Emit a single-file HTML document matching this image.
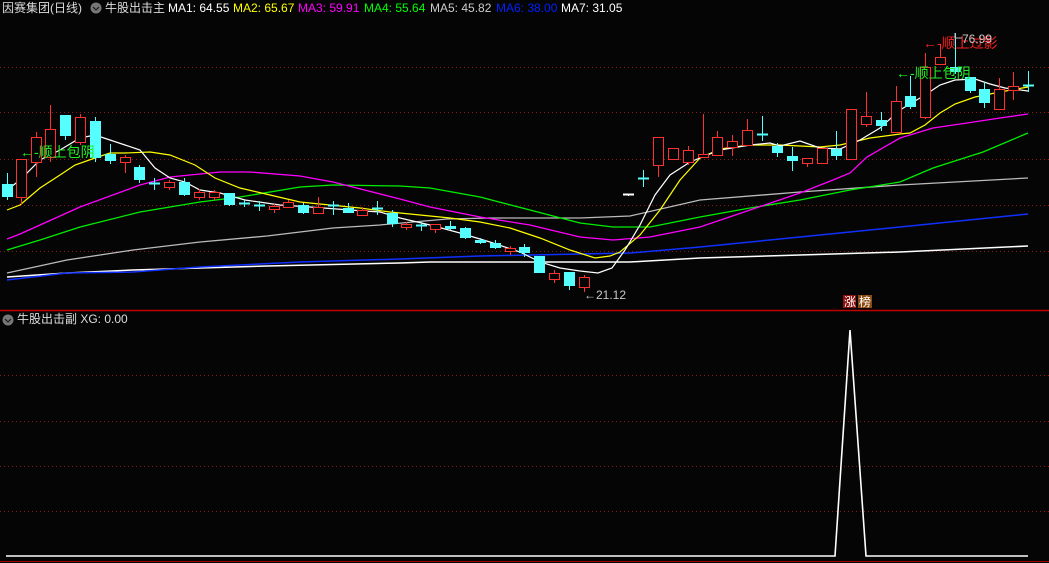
<!DOCTYPE html>
<html><head><meta charset="utf-8"><style>
html,body{margin:0;padding:0;background:#000;}
body{width:1049px;height:563px;overflow:hidden;position:relative;font-family:"Liberation Sans","Noto Sans CJK SC",sans-serif;}
svg{position:absolute;left:0;top:0;}
.t{position:absolute;top:1px;font-size:12px;line-height:14px;white-space:nowrap;}
</style></head><body>
<svg id="s" width="1049" height="563" viewBox="0 0 1049 563" xmlns="http://www.w3.org/2000/svg">
<rect width="1049" height="563" fill="#050505"/>
<g stroke="#8a1a1a" stroke-dasharray="1,3" stroke-width="1">
<line x1="0" y1="67.5" x2="1049" y2="67.5"/><line x1="0" y1="112.5" x2="1049" y2="112.5"/><line x1="0" y1="159.5" x2="1049" y2="159.5"/><line x1="0" y1="205.5" x2="1049" y2="205.5"/><line x1="0" y1="251.5" x2="1049" y2="251.5"/>
<line x1="0" y1="375.5" x2="1049" y2="375.5"/><line x1="0" y1="421.5" x2="1049" y2="421.5"/><line x1="0" y1="466.5" x2="1049" y2="466.5"/><line x1="0" y1="511.5" x2="1049" y2="511.5"/>
</g>
<line x1="0" y1="310.5" x2="1049" y2="310.5" stroke="#c00000" stroke-width="1.5"/>
<line x1="0" y1="561.5" x2="1049" y2="561.5" stroke="#a00000" stroke-width="1"/>
<g id="ma" fill="none" stroke-width="1.3"></g>
<g id="cd"></g>
<polyline points="6,556 835,556 850,330 866,556 1028,556" fill="none" stroke="#fff" stroke-width="1.6"/>
<text x="20" y="157" font-size="14" fill="#22ee22" font-family="Liberation Sans,Noto Sans CJK SC,sans-serif">←-顺上包阴</text>
<text x="896" y="78" font-size="14" fill="#22ee22" font-family="Liberation Sans,Noto Sans CJK SC,sans-serif">←-顺上包阴</text>
<text x="923" y="48" font-size="14" fill="#ff2020" font-family="Liberation Sans,Noto Sans CJK SC,sans-serif">←-顺上过影</text>
<polyline points="955,33 955,38 962,38" fill="none" stroke="#bbb" stroke-width="1"/>
<text x="962" y="43" font-size="12" fill="#c8c8c8" font-family="Liberation Sans,sans-serif">76.99</text>
<text x="584" y="299" font-size="12" fill="#c8c8c8" font-family="Liberation Sans,sans-serif">←21.12</text>
<rect x="843" y="295" width="13" height="13" fill="#8a1010"/>
<rect x="858" y="295" width="14" height="13" fill="#8a4a10"/>
<text x="844" y="306" font-size="12" fill="#fff" font-family="Noto Sans CJK SC,sans-serif">涨</text>
<text x="859" y="306" font-size="12" fill="#fff" font-family="Noto Sans CJK SC,sans-serif">榜</text>
<circle cx="96" cy="8" r="5.5" fill="#777"/><polyline points="93,7 96,10 99,7" fill="none" stroke="#222" stroke-width="1.3"/>
<circle cx="8" cy="320" r="5.5" fill="#777"/><polyline points="5,319 8,322 11,319" fill="none" stroke="#222" stroke-width="1.3"/>
</svg>
<div class="t" style="left:2px;color:#ddd">因赛集团(日线)</div>
<div class="t" style="left:105px;color:#ddd">牛股出击主</div>
<div class="t" style="left:168px;color:#fff">MA1: 64.55</div>
<div class="t" style="left:233px;color:#ffff00">MA2: 65.67</div>
<div class="t" style="left:298px;color:#ff00ff">MA3: 59.91</div>
<div class="t" style="left:364px;color:#00ff00">MA4: 55.64</div>
<div class="t" style="left:430px;color:#ccc">MA5: 45.82</div>
<div class="t" style="left:496px;color:#0020ff">MA6: 38.00</div>
<div class="t" style="left:561px;color:#fff">MA7: 31.05</div>
<div class="t" style="left:17px;top:312px;color:#ddd">牛股出击副 XG: 0.00</div>
<script>
var NS="http://www.w3.org/2000/svg";
function pl(g,pts,c,w){var p=document.createElementNS(NS,"polyline");p.setAttribute("points",pts.map(function(a){return a.join(",")}).join(" "));p.setAttribute("stroke",c);p.setAttribute("fill","none");p.setAttribute("stroke-width",w||1.3);g.appendChild(p);}
var ma=document.getElementById("ma");
pl(ma,[[7,277],[67,273],[133,270],[267,266],[400,263],[430,262],[630,262],[700,258],[800,255],[900,252],[1028,246]],"#fff",1.5);
pl(ma,[[7,280],[67,273],[133,272],[200,267],[300,262],[400,259],[480,256],[580,254],[630,253],[700,247],[800,237],[900,227],[1028,214]],"#1030ff",1.5);
pl(ma,[[7,273],[67,260],[133,250],[200,242],[267,236],[333,228],[380,225],[413,222],[447,219],[490,218],[580,218],[630,216],[700,200],[800,192],[900,185],[1028,178]],"#bbb",1.3);
pl(ma,[[7,250],[40,240],[80,227],[140,212],[200,202],[240,197],[300,187],[333,185],[400,186],[430,188],[480,197],[530,210],[580,223],[613,227],[650,227],[700,217],[750,208],[800,200],[850,190],[900,182],[933,168],[983,152],[1028,133]],"#00ee00",1.3);
pl(ma,[[7,239],[20,234],[80,207],[140,185],[170,177],[220,172],[250,172],[300,176],[333,182],[400,199],[430,207],[480,217],[530,225],[580,237],[613,240],[650,237],[700,227],[750,210],[800,193],[833,180],[850,173],[867,157],[900,138],[933,128],[967,123],[1000,118],[1028,114]],"#ff00ff",1.3);
pl(ma,[[7,210],[20,205],[40,188],[60,175],[75,165],[95,158],[110,153],[125,153],[150,152],[170,155],[195,165],[215,178],[240,188],[270,195],[300,202],[330,205],[360,208],[390,212],[420,215],[450,218],[480,222],[510,228],[540,238],[570,250],[595,258],[610,256],[620,252],[640,235],[660,210],[680,180],[700,158],[720,149],[750,145],[780,145],[820,147],[840,145],[870,138],[900,134],[910,133],[925,125],[940,113],[955,104],[975,97],[1000,92],[1028,87]],"#ffff00",1.2);
pl(ma,[[7,190],[20,180],[40,160],[60,150],[80,138],[95,135],[110,140],[125,145],[140,150],[155,168],[170,178],[185,182],[200,190],[220,193],[245,200],[280,205],[310,207],[350,210],[380,212],[400,218],[430,225],[460,233],[490,242],[520,252],[540,262],[560,268],[580,271],[598,273],[612,268],[625,250],[640,225],[655,195],[670,175],[690,162],[720,150],[750,145],[770,143],[780,146],[800,141],[820,148],[840,149],[860,140],[880,128],[900,110],[925,95],[940,85],[955,80],[975,79],[990,84],[1005,88],[1028,91]],"#fff",1.2);
var C=[[7,184,197,173,200,"c"],[21,159,197,159,205,"r"],[36,137,162,132,177,"r"],[50,129,157,105,162,"r"],[65,115,136,115,140,"c"],[80,117,142,114,145,"r"],[95,121,158,117,162,"c"],[110,154,161,144,164,"c"],[125,157,162,155,173,"r"],[139,167,180,165,183,"c"],[154,183,185,178,190,"c"],[169,182,187,180,190,"r"],[184,182,195,178,196,"c"],[199,192,197,189,200,"r"],[214,192,197,190,200,"r"],[229,193,205,193,206,"c"],[244,203,205,200,207,"c"],[259,205,207,201,211,"c"],[274,206,209,204,213,"r"],[288,202,207,200,208,"r"],[303,205,213,203,214,"c"],[318,207,213,197,214,"r"],[333,205,207,201,215,"c"],[348,208,213,203,213,"c"],[362,210,215,207,216,"r"],[377,208,210,201,215,"c"],[392,213,224,210,227,"c"],[406,224,227,222,230,"r"],[421,225,227,222,231,"c"],[435,224,229,224,233,"r"],[450,226,229,221,230,"c"],[465,228,238,227,239,"c"],[480,240,243,238,244,"c"],[495,243,248,240,249,"c"],[510,248,251,246,255,"r"],[524,247,253,244,257,"c"],[539,256,273,256,273,"c"],[554,273,279,270,283,"r"],[569,272,286,272,290,"c"],[584,277,287,275,292,"r"],
[628,194,195,194,196,"w"],[643,178,180,170,187,"c"],[658,137,165,137,177,"r"],[673,148,159,148,160,"r"],[688,150,162,146,165,"r"],[703,154,157,114,157,"r"],[717,137,155,131,155,"r"],[732,141,147,135,156,"r"],[747,130,145,119,146,"r"],[762,134,136,116,141,"c"],[777,146,153,143,157,"c"],[792,156,161,147,171,"c"],[807,158,163,158,167,"r"],[822,148,163,148,163,"r"],[836,149,156,131,160,"c"],[851,109,159,109,159,"r"],[866,116,124,92,127,"r"],[881,120,126,112,131,"c"],[896,101,132,86,132,"r"],[910,96,107,76,109,"c"],[925,67,117,53,119,"r"],[940,57,64,45,64,"r"],[955,67,72,33,74,"c"],[970,77,91,77,93,"c"],[984,89,103,82,108,"c"],[999,89,109,78,109,"r"],[1013,86,90,72,100,"r"],[1028,85,86,71,92,"c"]];
var cd=document.getElementById("cd");
function el(n,a){var e=document.createElementNS(NS,n);for(var k in a)e.setAttribute(k,a[k]);cd.appendChild(e);}
C.forEach(function(c){var x=c[0],t=c[1],b=c[2],h=c[3],l=c[4],ty=c[5];
var col=ty=="r"?"#ff3030":(ty=="w"?"#fff":"#55ffff");
el("line",{x1:x+0.5,y1:h,x2:x+0.5,y2:l,stroke:col,"stroke-width":1});
if(b-t<=2){el("line",{x1:x-5,y1:t+0.5,x2:x+6,y2:t+0.5,stroke:col,"stroke-width":2});}
else if(ty=="r"){el("rect",{x:x-4.5,y:t+0.5,width:10,height:b-t,fill:"#050505",stroke:col,"stroke-width":1});el("line",{x1:x+0.5,y1:h,x2:x+0.5,y2:t,stroke:col});el("line",{x1:x+0.5,y1:b+1,x2:x+0.5,y2:l,stroke:col});}
else{el("rect",{x:x-5,y:t,width:11,height:b-t,fill:col});}
});
</script>
</body></html>
